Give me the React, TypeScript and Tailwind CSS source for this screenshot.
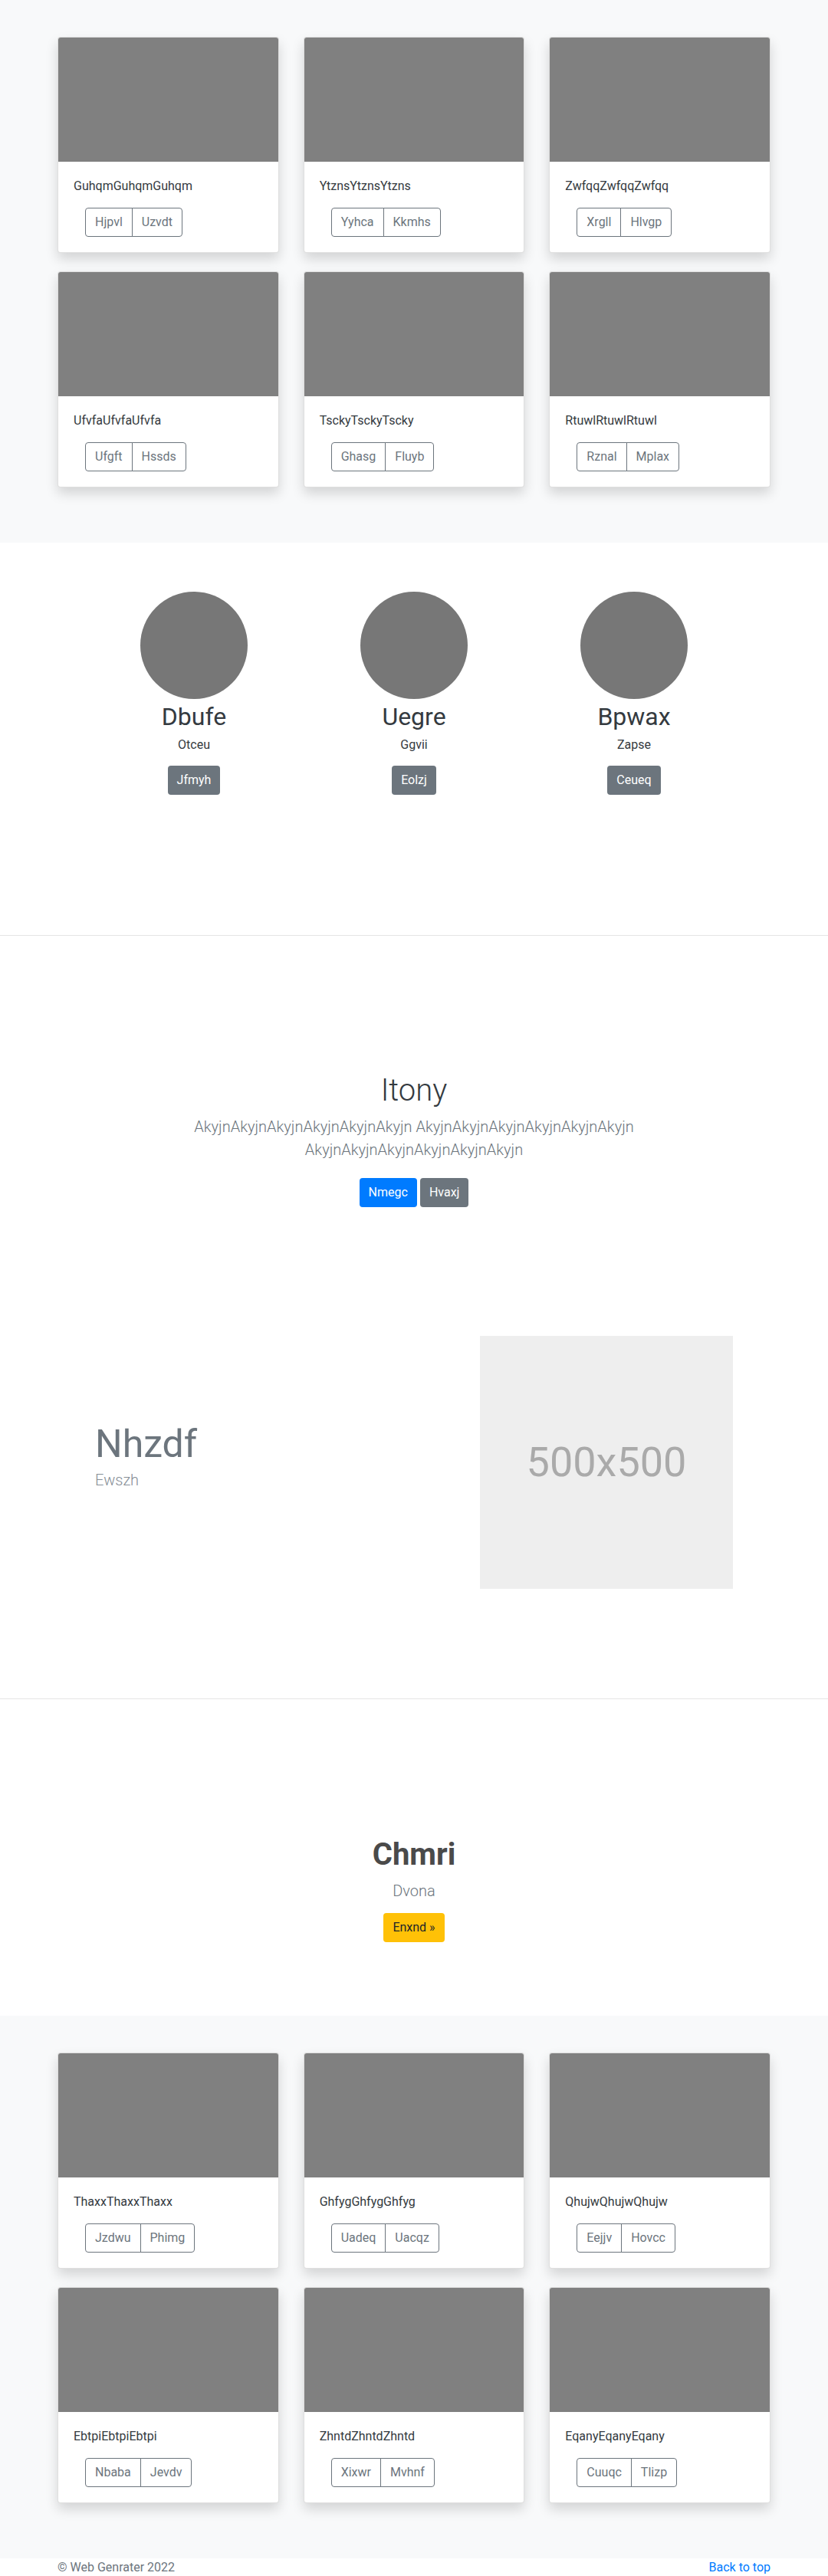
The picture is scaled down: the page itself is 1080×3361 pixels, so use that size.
import React from "react";

const TOP_CARDS = [
  { title: "GuhqmGuhqmGuhqm", a: "Hjpvl", b: "Uzvdt" },
  { title: "YtznsYtznsYtzns", a: "Yyhca", b: "Kkmhs" },
  { title: "ZwfqqZwfqqZwfqq", a: "Xrgll", b: "Hlvgp" },
  { title: "UfvfaUfvfaUfvfa", a: "Ufgft", b: "Hssds" },
  { title: "TsckyTsckyTscky", a: "Ghasg", b: "Fluyb" },
  { title: "RtuwlRtuwlRtuwl", a: "Rznal", b: "Mplax" },
];

const BOTTOM_CARDS = [
  { title: "ThaxxThaxxThaxx", a: "Jzdwu", b: "Phimg" },
  { title: "GhfygGhfygGhfyg", a: "Uadeq", b: "Uacqz" },
  { title: "QhujwQhujwQhujw", a: "Eejjv", b: "Hovcc" },
  { title: "EbtpiEbtpiEbtpi", a: "Nbaba", b: "Jevdv" },
  { title: "ZhntdZhntdZhntd", a: "Xixwr", b: "Mvhnf" },
  { title: "EqanyEqanyEqany", a: "Cuuqc", b: "Tlizp" },
];

const PEOPLE = [
  { name: "Dbufe", sub: "Otceu", btn: "Jfmyh" },
  { name: "Uegre", sub: "Ggvii", btn: "Eolzj" },
  { name: "Bpwax", sub: "Zapse", btn: "Ceueq" },
];

const AKYJN = "AkyjnAkyjnAkyjnAkyjnAkyjnAkyjn";

function Card({ title, a, b }: { title: string; a: string; b: string }) {
  return (
    <div className="mb-6 overflow-hidden rounded border border-black/[0.125] bg-white shadow-[0_8px_16px_rgba(0,0,0,0.15)]">
      <div className="h-[162px] bg-[#808080]" />
      <div className="p-5">
        <p className="mb-4 text-base leading-6 text-[#343a40]">{title}</p>
        <div className="ml-[15px] flex">
          <button className="h-[38px] rounded-l border border-[#6c757d] px-3 text-base leading-6 text-[#6c757d]">{a}</button>
          <button className="-ml-px h-[38px] rounded-r border border-[#6c757d] px-3 text-base leading-6 text-[#6c757d]">{b}</button>
        </div>
      </div>
    </div>
  );
}

function CardGrid({ cards }: { cards: typeof TOP_CARDS }) {
  return (
    <section className="bg-[#f8f9fa] pt-12 pb-12">
      <div className="mx-auto grid w-[930px] grid-cols-3 gap-x-8">
        {cards.map((c) => (
          <Card key={c.title} {...c} />
        ))}
      </div>
    </section>
  );
}

export default function App() {
  return (
    <div className="bg-white font-['Roboto','Helvetica_Neue',Arial,sans-serif] text-[#212529]">
      <CardGrid cards={TOP_CARDS} />

      {/* people */}
      <section className="border-b border-[#e5e5e5] pt-[64px] pb-[183px]">
        <div className="mx-auto grid w-[861px] grid-cols-3">
          {PEOPLE.map((p) => (
            <div key={p.name} className="flex flex-col items-center">
              <div className="h-[140px] w-[140px] rounded-full bg-[#777777]" />
              <h2 className="mt-[4px] text-[32px] leading-[38px] font-normal text-[#343a40]">{p.name}</h2>
              <p className="mt-[6px] text-base leading-6 text-[#343a40]">{p.sub}</p>
              <button className="mt-[15px] h-[38px] rounded bg-[#6c757d] px-3 text-base leading-6 text-white">{p.btn}</button>
            </div>
          ))}
        </div>
      </section>

      {/* hero */}
      <section className="pt-[178px] text-center">
        <h1 className="text-[40px] leading-[48px] font-light text-[#343a40]">Itony</h1>
        <p className="mx-auto mt-2 max-w-[640px] text-[20px] leading-[30px] font-light text-[#6c757d]">
          {AKYJN} {AKYJN} {AKYJN}
        </p>
        <div className="mt-[22px] flex justify-center gap-1">
          <button className="h-[38px] rounded bg-[#007bff] px-3 text-base leading-6 text-white">Nmegc</button>
          <button className="h-[38px] rounded bg-[#6c757d] px-3 text-base leading-6 text-white">Hvaxj</button>
        </div>
      </section>

      {/* feature */}
      <section className="border-b border-[#e5e5e5] pt-[168px] pb-[143px]">
        <div className="mx-auto grid w-[832px] grid-cols-2 items-center">
          <div>
            <h2 className="text-[50px] leading-[60px] font-normal text-[#6c757d]">Nhzdf</h2>
            <p className="mt-[2px] mb-4 text-[20px] leading-[30px] font-light text-[#868e96]">Ewszh</p>
          </div>
          <div className="flex justify-end">
            <div className="flex h-[330px] w-[330px] items-center justify-center bg-[#eeeeee]">
              <span className="text-[54px] leading-none text-[#aaaaaa]">500x500</span>
            </div>
          </div>
        </div>
      </section>

      {/* call to action */}
      <section className="pt-[179px] pb-[96px] text-center">
        <h2 className="text-[40px] leading-[48px] font-bold text-[#4a4a4a]">Chmri</h2>
        <p className="mt-2 text-[20px] leading-[30px] font-light text-[#6c757d]">Dvona</p>
        <button className="mt-[14px] h-[38px] rounded bg-[#ffc107] px-3 text-base leading-6 text-[#212529]">Enxnd »</button>
      </section>

      <CardGrid cards={BOTTOM_CARDS} />

      <footer className="flex h-[24px] justify-between bg-white px-[75px] text-base leading-6">
        <p className="text-[#6c757d]">© Web Genrater 2022</p>
        <a href="#" className="text-[#007bff]">Back to top</a>
      </footer>
    </div>
  );
}
